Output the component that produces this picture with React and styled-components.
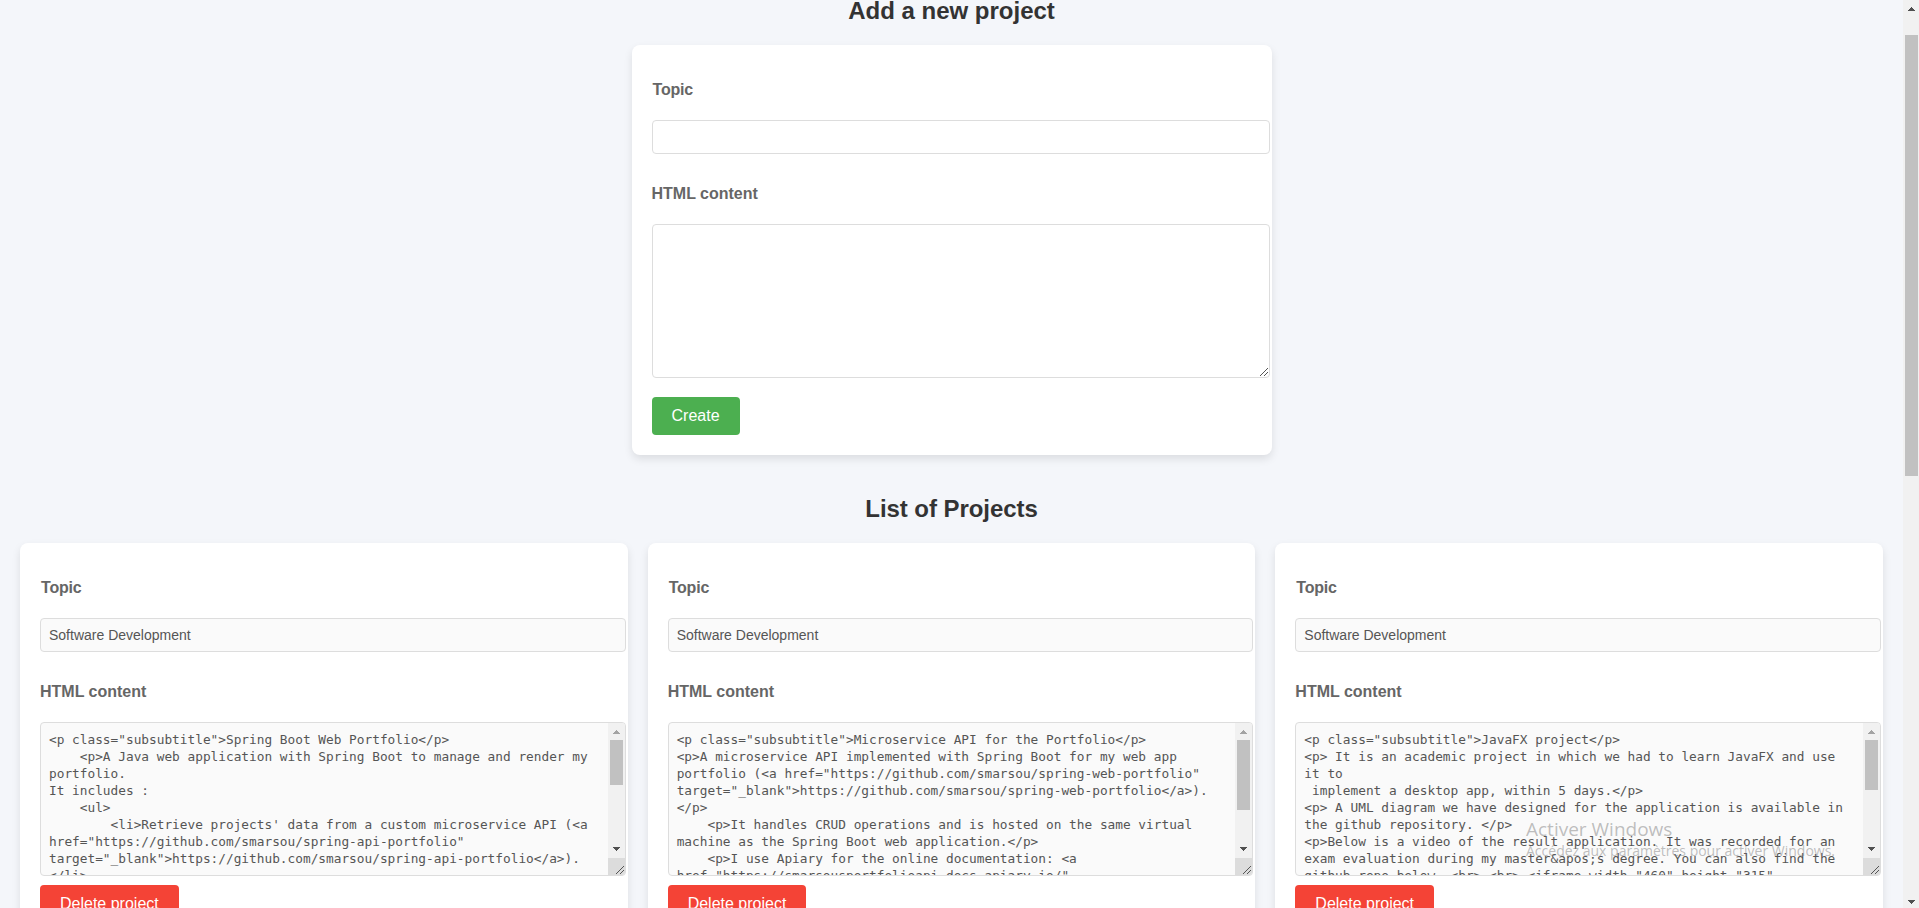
import React from "react";
import styled, { createGlobalStyle } from "styled-components";

const GlobalStyle = createGlobalStyle`
  body {
    margin: 0;
    background: #f4f6fa;
    font-family: "Liberation Sans", Arial, sans-serif;
    overflow: hidden;
  }
`;

const Window = styled.div`
  display: flex;
  height: 908px;
  overflow: hidden;
`;

const Page = styled.main`
  flex: 1;
  min-width: 0;
  height: 908px;
  overflow: hidden;
`;

const Heading = styled.h2`
  margin: ${(p) => p.$margin};
  font-size: 24px;
  line-height: 28px;
  letter-spacing: ${(p) => p.$tracking || "0"};
  font-weight: bold;
  color: #333;
  text-align: center;
`;

const Card = styled.section`
  box-sizing: border-box;
  min-width: 0;
  padding: 20px;
  background: #fff;
  border-radius: 8px;
  box-shadow: 0 4px 8px rgba(0, 0, 0, 0.1);
`;

const FormCard = styled(Card)`
  width: 640px;
  height: 410px;
  margin: 0 auto;
`;

const ProjectGrid = styled.div`
  display: grid;
  grid-template-columns: repeat(3, 1fr);
  gap: 20px;
  padding: 0 20px;
`;

const Label = styled.h4`
  margin: ${(p) => (p.$first ? "16px 0 21px 1px" : "31px 0 21px 0")};
  font-size: 16px;
  line-height: 18px;
  letter-spacing: ${(p) => (p.$first ? "-0.2px" : "0")};
  color: #666;
`;

const TopicBox = styled.div`
  box-sizing: border-box;
  width: calc(100% + 18px);
  height: 34px;
  padding: 8px;
  border: 1px solid #ddd;
  border-radius: 4px;
  background: ${(p) => (p.$filled ? "#fafafa" : "#fff")};
  font-size: 14px;
  line-height: 16px;
  color: #555;
`;

const ContentBox = styled.div`
  box-sizing: border-box;
  display: flex;
  justify-content: flex-end;
  width: calc(100% + 18px);
  height: 154px;
  border: 1px solid #ddd;
  border-radius: 4px;
  background: ${(p) => (p.$filled ? "#fafafa" : "#fff")};
  overflow: hidden;
`;

const Code = styled.pre`
  flex: 1;
  min-width: 0;
  margin: 0;
  padding: 8px;
  font-family: "DejaVu Sans Mono", monospace;
  font-size: 12.79px;
  line-height: 17px;
  color: #555;
`;

const BoxRail = styled.div`
  display: flex;
  flex-direction: column;
  justify-content: flex-end;
  width: 17px;
  background: ${(p) => (p.$filled ? "#f1f1f1" : "transparent")};
`;

const Track = styled.div`
  flex: 1;
  display: flex;
  flex-direction: column;
  align-items: center;
`;

const Thumb = styled.div`
  width: 13px;
  height: ${(p) => p.$height}px;
  background: #c1c1c1;
`;

const Arrow = styled.svg`
  display: block;
  width: 17px;
  height: 17px;
  flex: none;
  fill: ${(p) => (p.$dim ? "#a3a3a3" : "#505050")};
  margin-top: ${(p) => (p.$end ? "auto" : "0")};
`;

const Corner = styled.svg`
  display: block;
  width: 17px;
  height: 17px;
  flex: none;
  background: ${(p) => (p.$filled ? "#dcdcdc" : "transparent")};
`;

const Button = styled.button`
  display: block;
  height: 38px;
  margin: ${(p) => (p.$danger ? "9px" : "19px")} 0 0;
  padding: 0 20px;
  border: 0;
  border-radius: 4px;
  background: ${(p) => (p.$danger ? "#f44336" : "#4caf50")};
  color: #fff;
  font-family: inherit;
  font-size: 16px;
`;

const PageRail = styled.div`
  display: flex;
  flex-direction: column;
  align-items: flex-start;
  box-sizing: border-box;
  width: 16px;
  height: 911px;
  background: #f1f1f1;
`;

const PageThumb = styled(Thumb)`
  height: 441px;
  margin: 18px 0 0 2px;
`;

const Watermark = styled.div`
  position: absolute;
  left: 1526px;
  top: 814px;
  font-family: "Open Sans", sans-serif;
  color: rgba(120, 120, 120, 0.48);
  white-space: nowrap;
`;

const WatermarkTitle = styled.div`
  font-size: 19px;
  line-height: 30px;
`;

const WatermarkText = styled.div`
  font-size: 14px;
  line-height: 14px;
`;

const ArrowUp = (props) => (
  <Arrow viewBox="0 0 17 17" shapeRendering="crispEdges" {...props}>
    <path d="M8 7h1v1h1v1h1v1h1v1H5v-1h1V9h1V8h1z" />
  </Arrow>
);

const ArrowDown = (props) => (
  <Arrow viewBox="0 0 17 17" shapeRendering="crispEdges" {...props}>
    <path d="M5 6h7v1h-1v1h-1v1H9v1H8V9H7V8H6V7H5z" />
  </Arrow>
);

const Grip = ({ $filled }) => (
  <Corner $filled={$filled} viewBox="0 0 17 17">
    <path d="M8 16l8-8M12 16l4-4" stroke="#555" fill="none" />
  </Corner>
);

const projects = [
  {
    topic: "Software Development",
    thumb: 45,
    html: `<p class="subsubtitle">Spring Boot Web Portfolio</p>
    <p>A Java web application with Spring Boot to manage and render my
portfolio.
It includes :
    <ul>
        <li>Retrieve projects' data from a custom microservice API (<a
href="https://github.com/smarsou/spring-api-portfolio"
target="_blank">https://github.com/smarsou/spring-api-portfolio</a>).
</li>`,
  },
  {
    topic: "Software Development",
    thumb: 70,
    html: `<p class="subsubtitle">Microservice API for the Portfolio</p>
<p>A microservice API implemented with Spring Boot for my web app
portfolio (<a href="https://github.com/smarsou/spring-web-portfolio"
target="_blank">https://github.com/smarsou/spring-web-portfolio</a>).
</p>
    <p>It handles CRUD operations and is hosted on the same virtual
machine as the Spring Boot web application.</p>
    <p>I use Apiary for the online documentation: <a
href="https://smarsousportfolioapi.docs.apiary.io/"`,
  },
  {
    topic: "Software Development",
    thumb: 50,
    html: `<p class="subsubtitle">JavaFX project</p>
<p> It is an academic project in which we had to learn JavaFX and use
it to
 implement a desktop app, within 5 days.</p>
<p> A UML diagram we have designed for the application is available in
the github repository. </p>
<p>Below is a video of the result application. It was recorded for an
exam evaluation during my master&apos;s degree. You can also find the
github repo below. <br> <br> <iframe width="460" height="315"`,
  },
];

const ProjectCard = ({ project }) => (
  <Card>
    <Label $first>Topic</Label>
    <TopicBox $filled>{project.topic}</TopicBox>
    <Label>HTML content</Label>
    <ContentBox $filled>
      <Code>{project.html}</Code>
      <BoxRail $filled>
        <Track>
          <ArrowUp $dim />
          <Thumb $height={project.thumb} />
          <ArrowDown $end />
        </Track>
        <Grip $filled />
      </BoxRail>
    </ContentBox>
    <Button $danger>Delete project</Button>
  </Card>
);

export default function App() {
  return (
    <>
      <GlobalStyle />
      <Window>
        <Page>
          <Heading $margin="-3px 0 20px">Add a new project</Heading>
          <FormCard>
            <Label $first>Topic</Label>
            <TopicBox />
            <Label>HTML content</Label>
            <ContentBox>
              <BoxRail>
                <Grip />
              </BoxRail>
            </ContentBox>
            <Button>Create</Button>
          </FormCard>
          <Heading $margin="40px 0 20px" $tracking="-0.06px">List of Projects</Heading>
          <ProjectGrid>
            {projects.map((project, i) => (
              <ProjectCard key={i} project={project} />
            ))}
          </ProjectGrid>
        </Page>
        <PageRail>
          <ArrowUp />
          <PageThumb />
          <ArrowDown $end />
        </PageRail>
      </Window>
      <Watermark>
        <WatermarkTitle>Activer Windows</WatermarkTitle>
        <WatermarkText>Accédez aux paramètres pour activer Windows.</WatermarkText>
      </Watermark>
    </>
  );
}
